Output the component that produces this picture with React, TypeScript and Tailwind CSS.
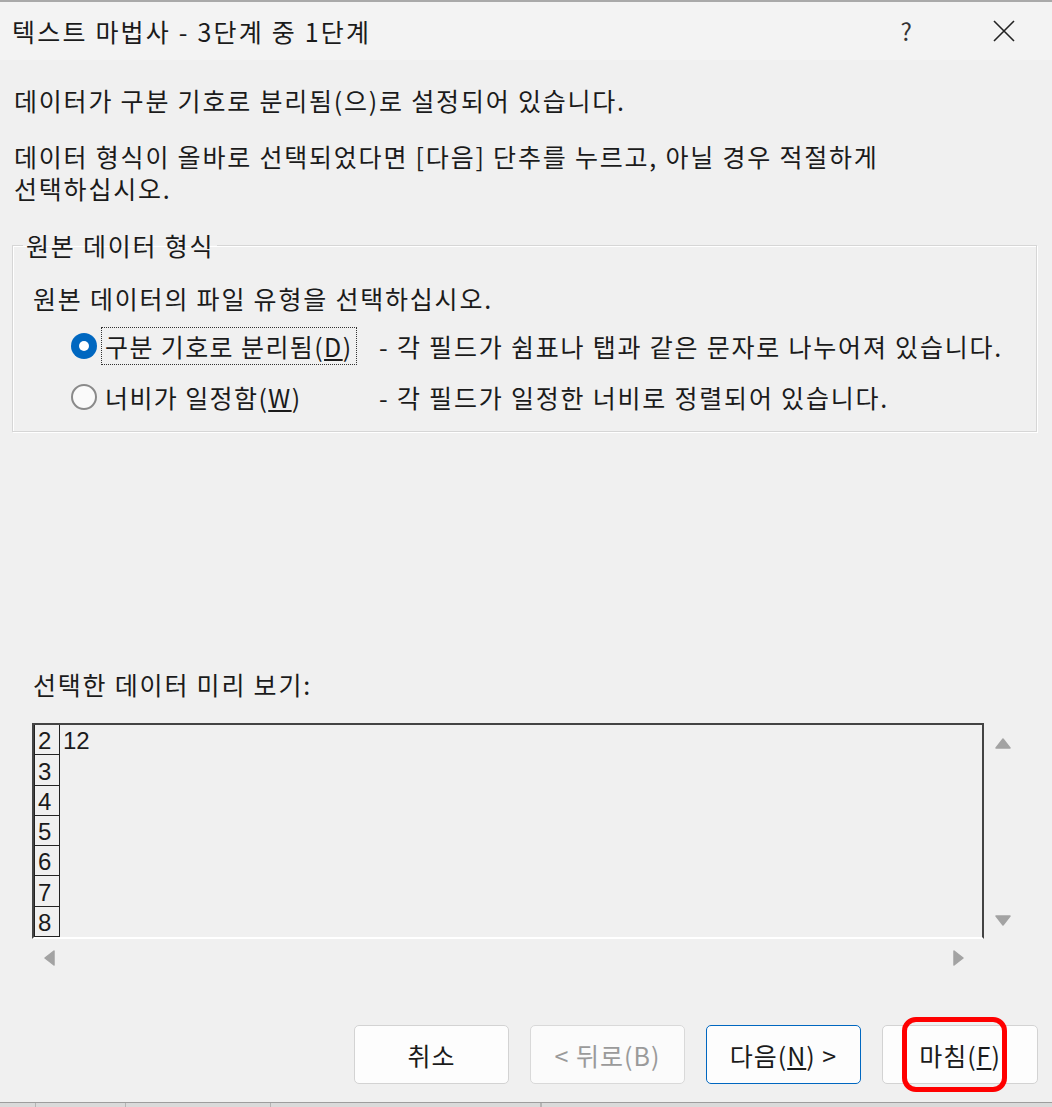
import React from 'react';

const KR = { fontFamily: '"Noto Sans CJK KR", "Noto Sans", sans-serif' };
const DIGITS = { fontFamily: '"Liberation Sans", Arial, sans-serif' };

const Radio: React.FC<{ checked?: boolean }> = ({ checked }) =>
  checked ? (
    <span className="flex h-[26px] w-[26px] shrink-0 items-center justify-center rounded-full bg-[#0067c0]">
      <span className="h-[10px] w-[10px] rounded-full bg-white" />
    </span>
  ) : (
    <span className="h-[26px] w-[26px] shrink-0 rounded-full border-2 border-[#8a8a8a] bg-[#fafafa]" />
  );

const Arrow: React.FC<{ dir: 'up' | 'down' | 'left' | 'right' }> = ({ dir }) => {
  const pts = {
    up: '1,11 8,2 15,11',
    down: '1,2 8,11 15,2',
    left: '11,1 2,8 11,15',
    right: '2,1 11,8 2,15',
  }[dir];
  const box = dir === 'up' || dir === 'down' ? { w: 16, h: 13 } : { w: 13, h: 16 };
  return (
    <svg width={box.w} height={box.h} viewBox={`0 0 ${box.w} ${box.h}`}>
      <polygon points={pts} fill="#a3a3a3" stroke="#a3a3a3" strokeWidth="1.5" strokeLinejoin="round" />
    </svg>
  );
};

const App: React.FC = () => {
  const rows = [2, 3, 4, 5, 6, 7, 8];

  return (
    <div className="flex h-[1107px] w-[1052px] flex-col overflow-hidden bg-[#f0f0f0] text-[25px] tracking-[1.8px] text-[#1b1b1b]" style={KR}>
      <div className="h-[2px] bg-[#a9a9a9]" />
      {/* title bar */}
      <div className="flex h-[58px] items-center bg-[#f3f3f3] pl-[12px]">
        <span className="leading-[32px] tracking-[2.2px]">텍스트 마법사 - 3단계 중 1단계</span>
        <span className="ml-auto mr-[81px] text-[24px] tracking-normal text-[#333]">?</span>
        <svg className="mr-[37px]" width="22" height="22" viewBox="0 0 22 22">
          <path d="M1 1 L21 21 M21 1 L1 21" stroke="#222" strokeWidth="1.6" />
        </svg>
      </div>

      <div className="flex flex-1 flex-col px-[12px] leading-[32px]">
        <p className="mt-[24px] pl-[2px]">데이터가 구분 기호로 분리됨(으)로 설정되어 있습니다.</p>
        <div className="mt-[24px] pl-[2px]">
          <p>데이터 형식이 올바로 선택되었다면 [다음] 단추를 누르고, 아닐 경우 적절하게</p>
          <p>선택하십시오.</p>
        </div>

        <fieldset className="mt-[25px] w-[1025px] border border-[#d6d6d6] pb-[15px] pl-[10px] shadow-[inset_1px_1px_0_#ffffff,1px_1px_0_#ffffff]">
          <legend className="px-[3px]">원본 데이터 형식</legend>
          <div className="pl-[10px]">
            <p className="mt-[21px]">원본 데이터의 파일 유형을 선택하십시오.</p>
            <div className="mt-[13px] flex h-[38px] items-center pl-[38px]">
              <Radio checked />
              <div className="ml-[4px] w-[278px]">
                <span className="inline-block border border-dotted border-[#333] px-[3px] leading-[36px] tracking-[1.4px]">
                  구분 기호로 분리됨(<span className="underline underline-offset-2">D</span>)
                </span>
              </div>
              <span className="whitespace-nowrap">- 각 필드가 쉼표나 탭과 같은 문자로 나누어져 있습니다.</span>
            </div>
            <div className="mt-[13px] flex h-[38px] items-center pl-[38px]">
              <Radio />
              <div className="ml-[4px] w-[278px]">
                <span className="inline-block px-[4px] tracking-[1.4px]">
                  너비가 일정함(<span className="underline underline-offset-2">W</span>)
                </span>
              </div>
              <span className="whitespace-nowrap">- 각 필드가 일정한 너비로 정렬되어 있습니다.</span>
            </div>
          </div>
        </fieldset>

        <p className="mt-[236px] pl-[21px]">선택한 데이터 미리 보기:</p>

        {/* preview */}
        <div className="mt-[23px] flex">
          <div className="ml-[20px] flex h-[216px] w-[952px] border-x-2 border-t-2 border-b-2 border-x-[#444] border-t-[#444] border-b-white tracking-normal" style={DIGITS}>
            <div className="flex w-[26px] flex-col border-l border-[#222]">
              {rows.map((n) => (
                <div key={n} className="flex h-[30.3px] items-end border-b border-r border-[#222] pl-[3px] text-[24px] leading-[26px]">
                  {n}
                </div>
              ))}
            </div>
            <div className="pl-[3px] pt-[2px] text-[24px] leading-[28px]">12</div>
          </div>
          <div className="flex w-[38px] flex-col items-center justify-between pb-[12px] pt-[14px]">
            <Arrow dir="up" />
            <Arrow dir="down" />
          </div>
        </div>
        <div className="flex h-[38px] items-center justify-between pl-[31px] pr-[75px]">
          <Arrow dir="left" />
          <Arrow dir="right" />
        </div>

        {/* buttons */}
        <div className="mb-[18px] mt-auto flex justify-end gap-[21px] pr-[2px] tracking-[1px]">
          <button className="h-[59px] w-[155px] rounded-[5px] border border-[#d3d3d3] bg-[#fdfdfd]">취소</button>
          <button className="h-[59px] w-[155px] rounded-[5px] border border-[#d9d9d9] bg-[#fbfbfb] text-[#9a9a9a]">
            &lt; 뒤로(B)
          </button>
          <button className="h-[59px] w-[155px] rounded-[5px] border-[1.5px] border-[#0067c0] bg-[#fdfdfd]">
            다음(<span className="underline underline-offset-2">N</span>) &gt;
          </button>
          <div className="relative">
            <button className="h-[59px] w-[156px] rounded-[5px] border border-[#d3d3d3] bg-[#fdfdfd]">
              마침(<span className="underline underline-offset-2">F</span>)
            </button>
            <div className="pointer-events-none absolute left-[20px] top-[-8px] h-[75px] w-[105px] rounded-[14px] border-[5px] border-[#ff0000]" />
          </div>
        </div>
      </div>

      {/* sheet edge behind the dialog */}
      <div className="flex h-[5px] border-t border-[#9d9d9d] bg-[#dadada]">
        {[36, 90, 145, 270, 1].map((w, i) => (
          <div key={i} className="border-r border-[#b5b5b5]" style={{ width: w }} />
        ))}
      </div>
    </div>
  );
};

export default App;
